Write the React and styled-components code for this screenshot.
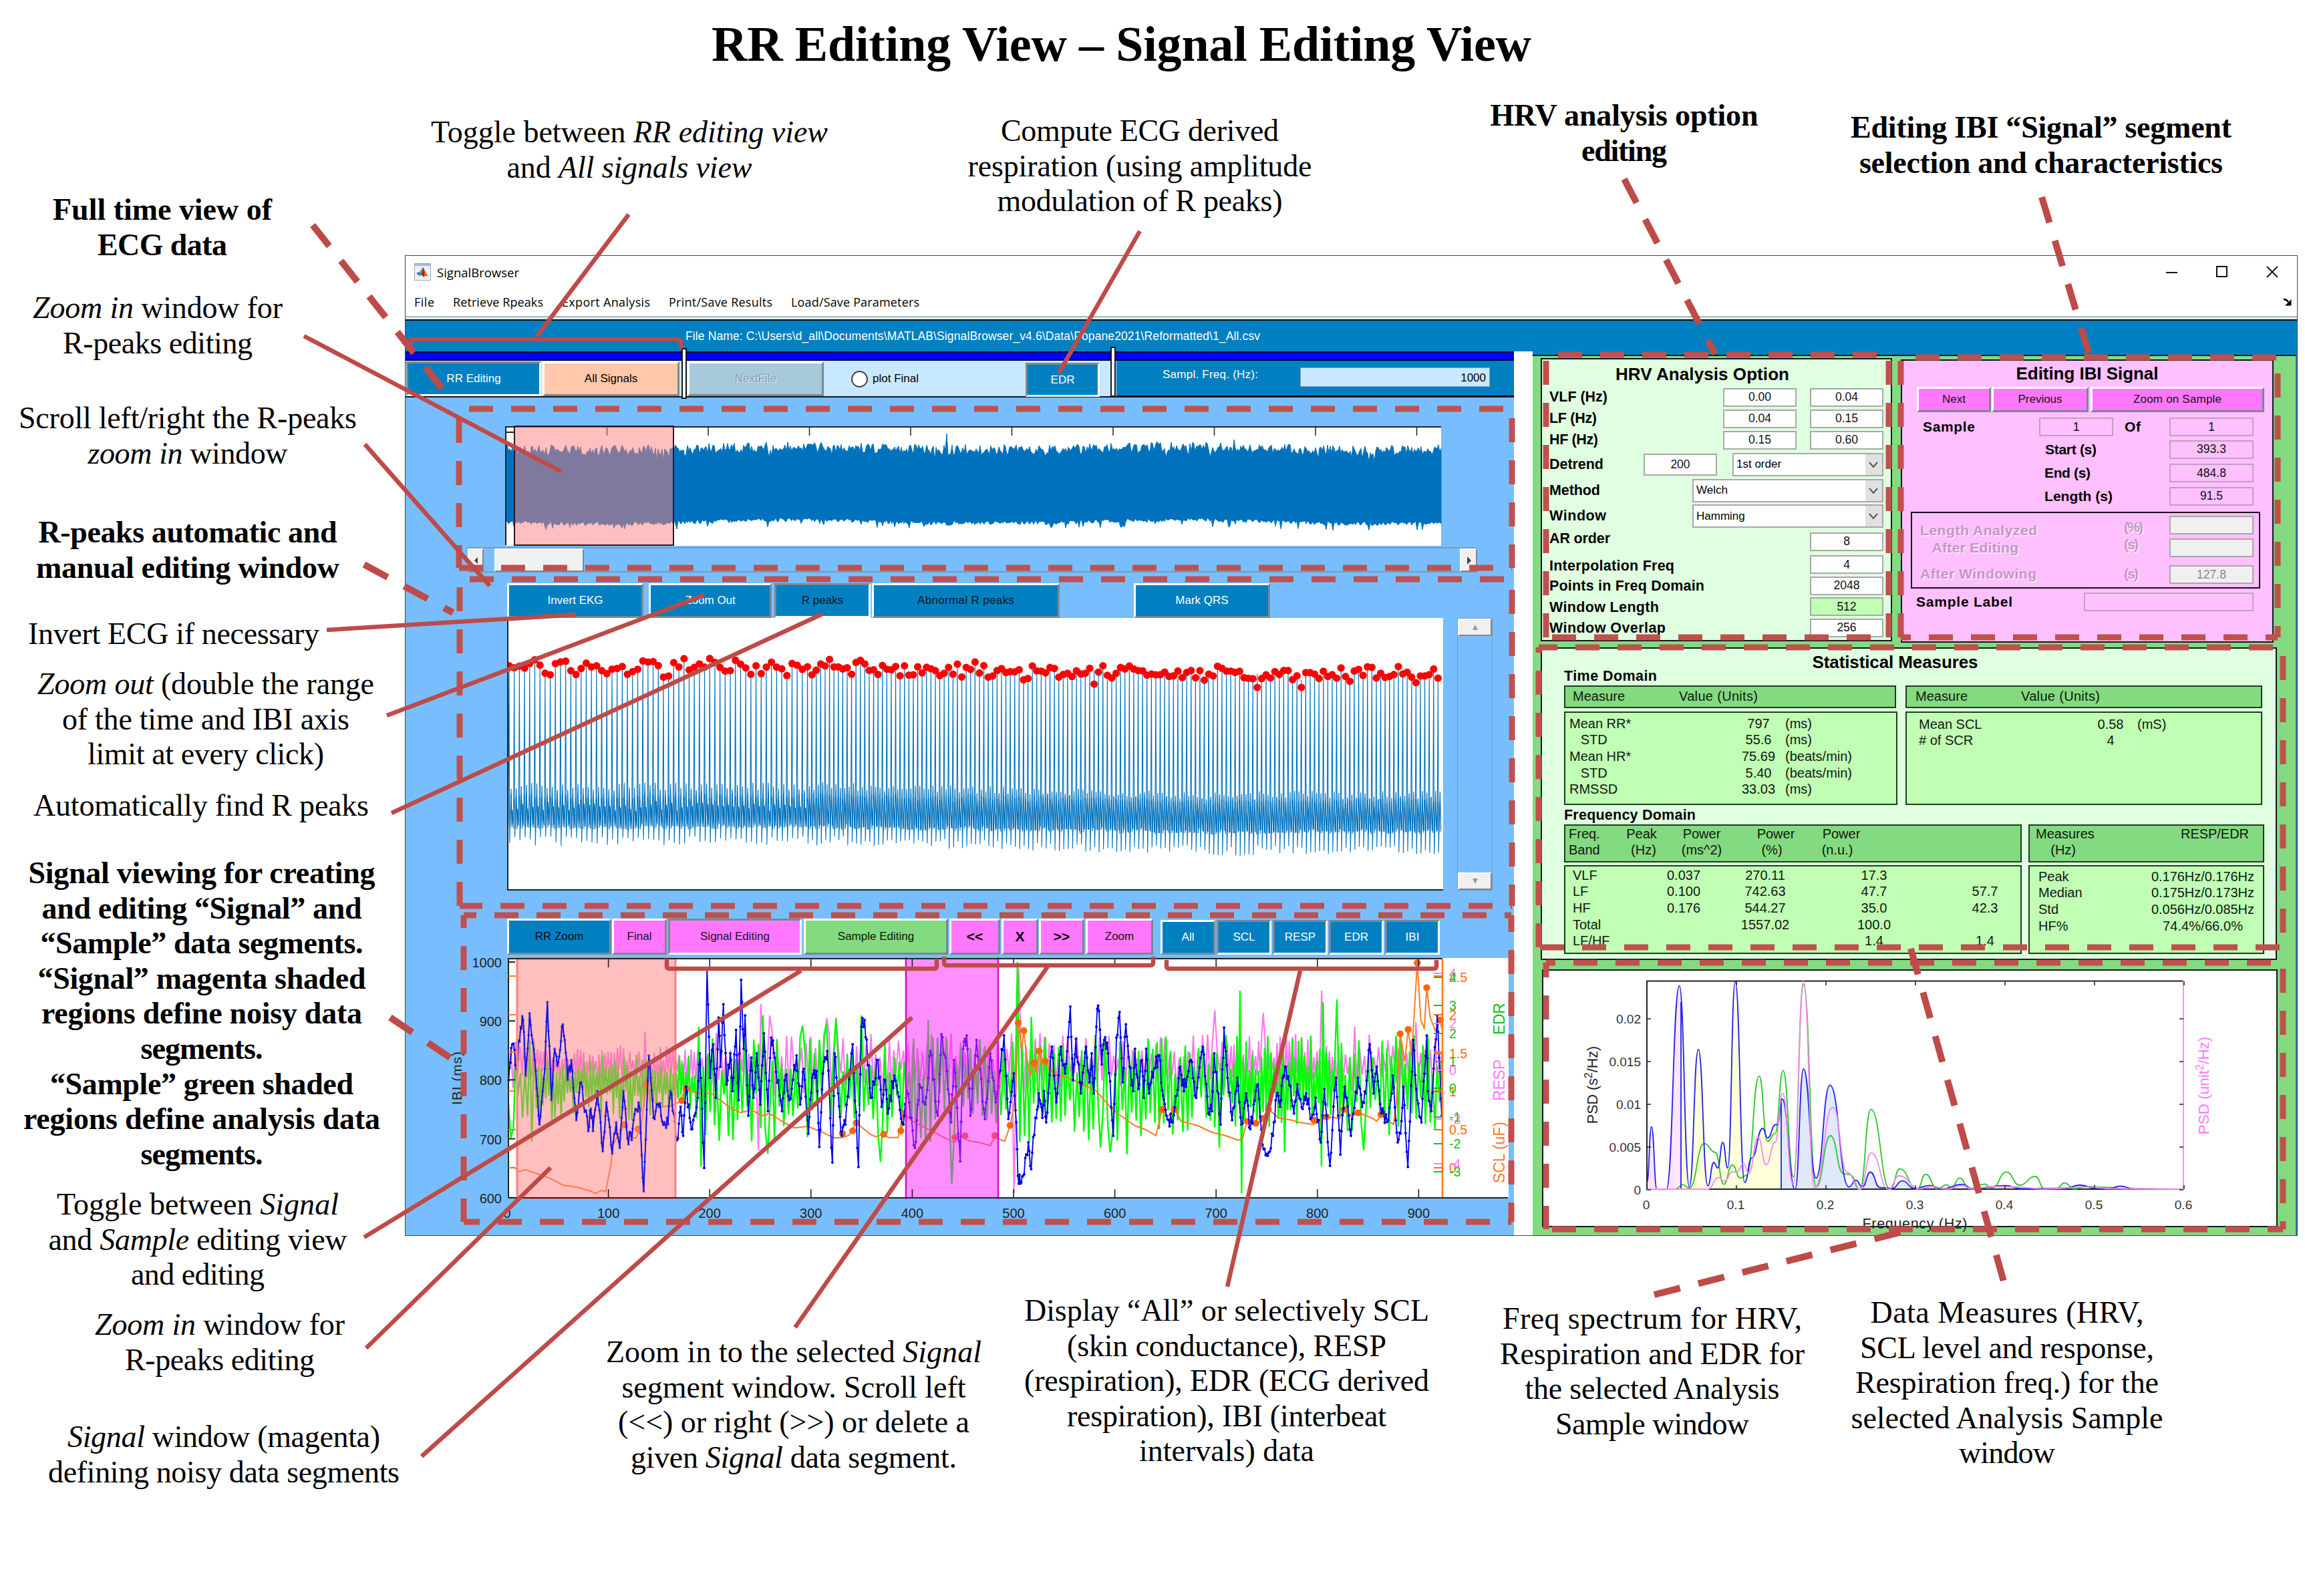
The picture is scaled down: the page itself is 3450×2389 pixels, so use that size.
import React, { useLayoutEffect, useRef, useState } from "react";
import styled, { createGlobalStyle, css } from "styled-components";

const RED = "#c0504d";
const BLUE = "#0080c0";
const SKY = "#78beff";
const ICE = "#c8e8ff";
const GREEN = "#84da80";
const MINT = "#e0ffe0";
const LIME = "#c0ffb4";
const PINK = "#ffc0ff";
const MAGENTA = "#ff78ff";
const SANS = '"Liberation Sans", Arial, sans-serif';
const SERIF = '"Liberation Serif", "Times New Roman", serif';

const Global = createGlobalStyle`
  body { margin: 0; background: #fff; }
  * { box-sizing: border-box; }
`;

/* ---------- text that spreads to a given width ---------- */

const FitSpan = styled.span`
  display: inline-block;
  width: max-content;
  flex: none;
  justify-self: start;
  white-space: pre;
`;

function Fit({ w, children }) {
  const ref = useRef(null);
  const [gap, setGap] = useState(0);
  useLayoutEffect(() => {
    const el = ref.current;
    const natural = el.getBoundingClientRect().width;
    setGap((w - natural) / Math.max(1, el.textContent.length - 1));
  }, []);
  return (
    <FitSpan ref={ref} style={{ letterSpacing: gap, marginRight: -gap }}>
      {children}
    </FitSpan>
  );
}

/* ---------- page ---------- */

const Page = styled.main`
  position: relative;
  width: 3450px;
  height: 2389px;
  overflow: hidden;
  background: #fff;
  font-family: ${SANS};
  color: #000;
`;

const Heading = styled.h1`
  position: absolute;
  left: 1065px;
  top: 24px;
  margin: 0;
  font: bold 74px/84px ${SERIF};
`;

const Note = styled.div`
  position: absolute;
  left: ${(p) => p.$cx - 400}px;
  top: ${(p) => p.$base - 40}px;
  width: 800px;
  display: flex;
  flex-direction: column;
  align-items: center;
  font: ${(p) => (p.$bold ? "bold" : "normal")} 46px/52.6px ${SERIF};
`;

const Overlay = styled.svg`
  position: absolute;
  left: 0;
  top: 0;
`;

/* ---------- application window ---------- */

const Desktop = styled.div`
  display: flow-root;
`;

const Frame = styled.section`
  margin: 382px 0 0 606px;
  width: 2833px;
  height: 1468px;
  display: flex;
  flex-direction: column;
  border: 1px solid #3c4848;
  background: #fff;
`;

const TitleBar = styled.header`
  height: 48px;
  flex: none;
  display: flex;
  align-items: center;
  padding: 0 28px 0 13px;
  gap: 9px;
  font: 18.5px "Open Sans", sans-serif;
`;

const Controls = styled.div`
  margin-left: auto;
  display: flex;
  gap: 57px;
`;

const MenuBar = styled.nav`
  height: 42px;
  flex: none;
  display: flex;
  align-items: center;
  gap: 28px;
  padding: 0 8px 0 13px;
  font: 18px "Open Sans", sans-serif;
  svg { margin-left: auto; }
`;

const FileBand = styled.div`
  height: 53px;
  flex: none;
  display: flex;
  align-items: center;
  padding-left: 419px;
  border-top: 2px solid #b4b4b4;
  background: linear-gradient(#d8f0f8 0 3px, #001018 3px 5px, ${BLUE} 5px);
  color: #fff;
  font-size: 17.5px;
  padding-top: 6px;
`;

const Body = styled.div`
  flex: 1;
  display: flex;
  gap: 28px;
  min-height: 0;
`;

const Left = styled.div`
  width: 1659px;
  flex: none;
  display: flex;
  flex-direction: column;
  background: ${SKY};
`;

const Stripe = styled.div`
  height: 14px;
  flex: none;
  background: #0000ff;
  border: solid #000030;
  border-width: 2px 0;
`;

const Toolbar = styled.div`
  height: 55px;
  flex: none;
  display: flex;
  align-items: flex-start;
  background: ${ICE};
  border-bottom: 2px solid #101820;
`;

const Button = styled.button`
  width: ${(p) => p.$w}px;
  height: ${(p) => p.$h || 52}px;
  margin: ${(p) => p.$mt || 0}px 0 0 ${(p) => p.$ml || 0}px;
  flex: none;
  padding: 0;
  display: flex;
  align-items: center;
  justify-content: center;
  border: 3px solid;
  border-color: ${(p) => (p.$down ? "#7c8890 #fff #fff #7c8890" : "#fff #7c8890 #7c8890 #fff")};
  background: ${(p) => p.$bg || BLUE};
  color: ${(p) => p.$fg || "#fff"};
  font: ${(p) => (p.$bold ? "bold" : "normal")} ${(p) => p.$size || 17}px ${SANS};
  ${(p) => p.$off && css`text-shadow: 1px 1px 0 #e4f0f8;`}
`;

const Divider = styled.i`
  flex: none;
  position: relative;
  width: 8px;
  height: ${(p) => p.$h}px;
  margin: ${(p) => p.$mt}px 1px 0 ${(p) => p.$ml}px;
  background: #fff;
  border: 2px solid #101820;
`;

const Radio = styled.label`
  display: flex;
  align-items: center;
  gap: 7px;
  height: 54px;
  width: 302px;
  padding-left: 41px;
  font-size: 17px;
  &::before {
    content: "";
    width: 21px;
    height: 21px;
    border: 2px solid #444;
    border-radius: 50%;
    background: #fff;
  }
`;

const Sampling = styled.div`
  flex: 1;
  height: 54px;
  display: flex;
  background: ${BLUE};
  border-bottom: 2px solid #000;
  padding-left: 69px;
  color: #fff;
  font-size: 17px;
  line-height: 42px;
`;

const Rate = styled.div`
  width: 284px;
  height: 29px;
  margin: 10px 0 0 63px;
  padding-right: 5px;
  border: 1px solid #8ca0b0;
  background: ${ICE};
  color: #000;
  text-align: right;
  line-height: 29px;
`;

const Plot = styled.svg`
  display: block;
  flex: none;
  margin: ${(p) => p.$m || "0"};
  text { font-family: ${SANS}; }
`;

const HScroll = styled.div`
  display: flex;
  flex: none;
  width: 1511px;
  height: 38px;
  margin: 2px 0 0 93px;
  border: 2px solid #7c98b4;
  border-width: 2px 0;
`;

const Knob = styled.div`
  width: ${(p) => p.$w}px;
  height: ${(p) => p.$h}px;
  flex: none;
  margin-left: ${(p) => p.$ml || 0};
  display: flex;
  align-items: center;
  justify-content: center;
  background: #f0f0f0;
  border: 2px solid;
  border-color: #fff #7c8890 #7c8890 #fff;
`;

const ButtonRow = styled.div`
  display: flex;
  flex: none;
  align-items: flex-start;
  margin: ${(p) => p.$m};
`;

const ChartRow = styled.div`
  display: flex;
  flex: none;
  gap: 20px;
  margin-left: 152px;
`;

const VScroll = styled.div`
  width: 53px;
  height: 408px;
  display: flex;
  flex-direction: column;
  justify-content: space-between;
  border: 1px solid #7c98b4;
`;

/* ---------- right side ---------- */

const Right = styled.div`
  width: 1144px;
  flex: none;
  display: flex;
  flex-direction: column;
  background: ${GREEN};
  border-top: 5px solid ${BLUE};
  border-right: 2px solid #3870a0;
  box-shadow: inset 0 2px #101820;
  padding: 5px 0 0 12px;
`;

const Panels = styled.div`
  display: flex;
  height: 434px;
  gap: 13px;
`;

const HrvPanel = styled.section`
  width: 526px;
  height: 424px;
  padding: 3px 11px 0 11px;
  border: 2px solid #101820;
  background: ${MINT};
`;

const PanelTitle = styled.h2`
  margin: 0 ${(p) => p.$mr || 0}px 0 0;
  height: ${(p) => p.$h}px;
  text-align: center;
  font: bold 26px/38px ${SANS};
`;

const FormRow = styled.div`
  height: ${(p) => p.$h}px;
  display: flex;
  align-items: center;
  font: bold 21.5px ${SANS};
  & > :first-child { transform: translateY(${(p) => p.$dy || 0}px); }
  & > :nth-child(2) { margin-left: auto; }
`;

const Field = styled.div`
  width: ${(p) => p.$w || 110}px;
  height: ${(p) => p.$h || 28}px;
  margin-left: ${(p) => p.$ml || 0}px;
  flex: none;
  display: flex;
  align-items: center;
  justify-content: center;
  border: 2px solid ${(p) => p.$edge || "#a8a8a8"};
  background: ${(p) => p.$bg || "#fff"};
  color: ${(p) => p.$fg || "#111"};
  font: 17.5px ${SANS};
  text-shadow: none;
`;

const Select = styled.div`
  width: ${(p) => p.$w}px;
  height: 35px;
  margin-left: ${(p) => p.$ml || 0}px;
  flex: none;
  display: flex;
  align-items: center;
  justify-content: space-between;
  padding-left: 4px;
  border: 2px solid #a8a8a8;
  background: linear-gradient(to left, #e0e0e0 25px, #fff 25px);
  font: 17px ${SANS};
`;

const IbiPanel = styled.section`
  width: 558px;
  height: 424px;
  margin-top: 2px;
  border: 2px solid #101820;
  background: ${PINK};
  font: bold 21px ${SANS};
`;

const IbiButtons = styled.div`
  display: flex;
  padding-left: 22px;
  margin-bottom: 6px;
`;

const IbiRow = styled.div`
  height: ${(p) => p.$h}px;
  display: grid;
  align-items: center;
  grid-template-columns: ${(p) => p.$cols};
  padding-left: ${(p) => p.$pl}px;
`;

const GreyBox = styled.div`
  width: 523px;
  height: 115px;
  margin: 7px 0 0 13px;
  padding-left: 12px;
  display: grid;
  grid-template-columns: 305px 68px 126px;
  border: 2px solid #181018;
  color: #c09ac0;
  text-shadow: 1.5px 1.5px 0 #ffe8ff;
`;

const GreyColumn = styled.div`
  display: flex;
  flex-direction: column;
  align-items: flex-start;
  padding-top: ${(p) => p.$pt}px;
  line-height: 26px;
  gap: ${(p) => p.$gap || 0}px;
  & > :last-child { margin-top: ${(p) => p.$last}px; }
`;

const Stats = styled.section`
  width: 1102px;
  height: 470px;
  padding: 1px 0 0 33px;
  border: 2px solid #101820;
  background: ${MINT};
  font-size: 20px;
`;

const Sub = styled.h3`
  margin: 0;
  height: ${(p) => p.$h}px;
  font: bold 21.5px/28px ${SANS};
`;

const Pair = styled.div`
  display: flex;
  align-items: flex-start;
  gap: ${(p) => p.$gap}px;
  margin-bottom: ${(p) => p.$mb}px;
`;

const Box = styled.div`
  width: ${(p) => p.$w}px;
  height: ${(p) => p.$h}px;
  padding: ${(p) => p.$p};
  border: 2px solid #184018;
  background: ${(p) => (p.$head ? GREEN : LIME)};
  overflow: hidden;
  color: #101810;
`;

const Cells = styled.div`
  display: grid;
  grid-template-columns: ${(p) => p.$cols};
  line-height: 24.7px;
  white-space: pre;
  text-align: center;
  & > :first-child { text-align: left; }
  ${(p) => p.$left && css`text-align: left;`}
`;

const Unit = styled.span`
  margin-left: -10px;
  text-align: left;
`;

const Spectrum = styled.div`
  margin-top: 14px;
  margin-left: 2px;
`;

/* ---------- data ---------- */

function rng(seed) {
  let s = seed;
  return () => {
    s = (s * 1664525 + 1013904223) % 4294967296;
    return s / 4294967296;
  };
}

const line = (pts) => "M" + pts.map((p) => p[0].toFixed(1) + " " + p[1].toFixed(1)).join("L");

function ecgBand() {
  const r = rng(7);
  const up = [];
  const low = [];
  for (let i = 0; i <= 700; i++) {
    const x = i * 2;
    const drift = 5 * Math.sin(i / 46) + (i > 335 && i < 400 ? -2 : 0);
    up.push([x, 34 + drift * 0.5 + (r() - 0.5) * 16 + (r() > 0.92 ? 10 : 0)]);
    low.push([x, 143 + drift * 0.6 + (r() - 0.5) * 6 + (r() > 0.94 ? 8 : 0)]);
  }
  up[330][1] = 11;
  up[545][1] = 20;
  return line(up.concat(low.reverse())) + "Z";
}

function beats() {
  const r = rng(23);
  const tops = [];
  const trace = [];
  const waves = [];
  let x = 3;
  while (x < 1398) {
    const k = x / 1398;
    const sag = k < 0.35 ? 0 : k < 0.8 ? (k - 0.35) * 36 : 13;
    const peak = 74 + sag * 0.75 + 8 * Math.sin(x * 0.14) * (k < 0.3 ? 0.8 : 0.45) + (r() - 0.5) * 20;
    const base = 302 + sag * 0.5 + (r() - 0.5) * 5;
    tops.push([x, peak]);
    trace.push([x - 3, base - 14 - r() * 12], [x - 1.2, base + 8 + r() * 6], [x, peak]);
    trace.push([x + 0.8, 334 + sag + (r() - 0.5) * 14], [x + 1.8, base - 2], [x + 3, 252 + sag + (r() - 0.5) * 12], [x + 4.2, base + 12]);
    waves.push([x, base - 32 - r() * 6], [x + 1.6, base + 12], [x + 3, base - 34 - r() * 6], [x + 4.4, base + 8]);
    x += k < 0.32 ? 7.7 : 6.6;
  }
  tops[Math.round(tops.length * 0.61)][1] = 99;
  tops[Math.round(tops.length * 0.79)][1] = 104;
  tops[Math.round(tops.length * 0.84)][1] = 104;
  return { tops, trace, waves };
}

const unpack = (s, sx, ox) =>
  s.trim().split(/\s+/).map((p) => {
    const [x, y] = p.split(",").map(Number);
    return [ox + x / sx, 1350 + y / 3];
  });

const ibiKnots = unpack(
  `150,800 160,640 172,750 183,560 190,530 197,780 208,500 225,760 235,1000 250,750 257,450 268,890 277,660 287,720 297,560 305,620 313,800 323,710 337,980 350,810 370,1030 377,930 383,1030 395,850 410,1120 420,900 436,1130 447,990 457,1105 467,850 478,1060 490,1070 500,930 512,930 523,1300 537,690 550,970 565,920 580,990 590,1000 597,850 615,1070 625,920 632,1050 640,830 650,970 657,1020 672,880 678,680 690,1195 698,300 706,790 715,640 722,880 730,520 735,740 743,460 752,820 762,680 768,850 778,575 785,890 792,350 799,660 803,510 812,960 820,700 826,880 835,680 845,910 855,590 866,940 875,610 885,700 905,940 915,780 925,890 945,690 955,910 965,750 978,1040 988,790 1000,760 1008,1100 1018,770 1030,670 1044,1170 1050,680 1060,860 1070,1050 1080,1000 1100,640 1116,1190 1124,560 1133,530 1150,880 1170,710 1180,920 1190,800 1197,950 1215,780 1240,1000 1250,850 1272,1105 1285,820 1300,910 1315,670 1335,960 1345,595 1360,760 1372,990 1380,710 1397,1165 1405,660 1415,600 1425,960 1442,620 1465,975 1480,680 1495,900 1518,600 1530,975 1545,770 1552,990`,
  1.845, 680
).concat(
  unpack(
    `45,1230 52,1265 60,1230 75,1080 83,1200 95,970 105,860 115,970 120,850 126,990 142,650 155,900 168,650 180,770 195,470 203,800 211,615 225,860 240,650 250,810 256,680 262,860 272,480 277,490 285,730 292,620 303,680 318,1050 327,610 336,495 345,810 354,550 365,740 375,850 380,660 390,840 400,710 405,880 412,660 420,860 435,750 450,690 460,870 470,960 488,990 500,870 510,740 520,850 540,710 555,880 574,650 590,950 600,940 607,680 625,1000 635,565 645,790 658,980 673,790 685,1000 698,860 710,1020 732,820 745,1090 760,1140 775,1050 785,870 795,920 805,780 812,740 835,950 845,820 860,930 870,860 885,970 897,880 912,1080 922,840 938,1185 955,790 968,1135 980,830 998,1050 1018,790 1030,920 1040,860 1052,640 1063,860 1072,740 1085,950 1105,980 1118,780 1132,1080 1140,1040 1148,830 1161,1190 1176,620 1188,890 1200,990 1215,600 1218,850 1228,940 1245,510 1250,700 1258,960`,
    1.912, 1500
  )
);

const sclKnots = unpack(
  `150,1195 165,1192 180,1212 195,1202 230,1222 260,1238 300,1272 340,1282 375,1298 390,1310 407,1295 418,1302 425,1240 432,1190 438,1090 455,1040 470,1000 480,1050 500,1062 515,1020 530,820 545,890 570,920 600,915 620,900 640,838 665,855 685,862 708,858 730,885 760,922 790,946 820,935 850,960 870,950 910,990 940,1015 975,1008 1010,1030 1050,1060 1072,1058 1090,1048 1110,992 1150,1045 1165,1055 1180,1045 1200,1058 1225,1058 1240,950 1270,990 1320,1030 1380,1082 1395,1052 1425,1075 1450,1080 1480,1096 1493,1050 1505,1065 1520,1075 1535,1003`,
  1.845, 680
).concat(
  unpack(
    `38,880 46,540 56,660 62,578 70,700 81,780 90,720 98,765 106,670 113,730 123,715 135,750 155,778 180,785 230,820 270,850 300,905 330,950 380,1005 410,1022 440,1050 458,930 474,965 492,930 512,985 560,1005 600,1035 640,1050 675,1070 688,1065 702,975 726,1005 745,970 762,930 790,970 830,980 850,990 890,1000 930,965 965,972 978,930 1000,965 1018,945 1060,972 1072,985 1084,955 1120,1000 1128,900 1139,592 1152,715 1162,573 1172,690 1180,480 1188,272 1198,530 1208,570 1215,385 1225,520 1240,580 1254,530 1258,570`,
    1.912, 1500
  )
);

const sclDots = unpack(
  `530,820 628,892 640,838 470,1000 508,1020 1072,1040 1100,1028 1110,992 1186,1043 1233,1028 1240,950 1383,1058 1410,1050 1493,1050 1535,1003`,
  1.845, 680
).concat(
  unpack(
    `46,543 62,578 90,722 106,670 123,715 458,932 492,932 702,985 726,994 745,972 762,932 892,980 928,965 978,932 1018,947 1084,955 1139,592 1162,573 1188,274 1215,385 1254,530`,
    1.912, 1500
  )
);

function ibiSeries() {
  const r = rng(91);
  const out = [];
  ibiKnots.forEach((p, i) => {
    out.push(p);
    const q = ibiKnots[i + 1];
    if (!q) return;
    const n = Math.max(1, Math.round((q[0] - p[0]) / 2));
    for (let k = 1; k <= n; k++) {
      const t = k / (n + 1);
      out.push([p[0] + (q[0] - p[0]) * t, p[1] + (q[1] - p[1]) * t + (r() - 0.5) * 22]);
    }
  });
  return out;
}

function breath(seed, mid, up, down, spikes) {
  const r = rng(seed);
  const out = [];
  let high = false;
  let x = 761;
  while (x < 2159) {
    const calm = x > 800 && x < 1040;
    const busy = x > 1840 && x < 2010;
    const a = calm ? 0.62 : 1;
    out.push([x, high ? mid - up * a * (0.2 + r() * 0.9) : mid + down * a * (busy ? 0.75 : 1) * (0.15 + r() * 0.95)]);
    high = !high;
    x += calm ? 2.3 : busy ? 2.3 : 3.1 + r() * 0.8;
  }
  spikes.forEach(([sx, sy]) => {
    let best = out[0];
    out.forEach((p) => {
      if (Math.abs(p[0] - sx) < Math.abs(best[0] - sx)) best = p;
    });
    best[1] = sy;
  });
  return out;
}

const { tops, trace, waves } = beats();
const bandPath = ecgBand();
const ibi = ibiSeries();
const green = breath(5, 1624, 68, 78, [
  [765, 1703], [1046, 1537], [1049, 1746], [1141, 1520], [1148, 1727], [1201, 1535], [1238, 1532], [1250, 1525], [1289, 1520], [1319, 1739],
  [1390, 1527], [1424, 1465], [1426, 1772], [1524, 1440], [1543, 1522], [1646, 1718], [1661, 1725], [1688, 1728], [1826, 1718], [1857, 1483],
  [1859, 1786], [1922, 1725], [1978, 1746], [1980, 1500], [2000, 1496], [2040, 1722],
]);
const resp = breath(17, 1596, 46, 40, [
  [965, 1544], [1140, 1503], [1136, 1722], [1151, 1520], [1237, 1524], [1250, 1523], [1519, 1786], [1524, 1450], [1818, 1512], [1891, 1516],
  [1979, 1483], [2027, 1537], [2120, 1530],
]);

const swell = (s) => {
  const pts = s.trim().split(/\s+/).map((p) => {
    const [x, y] = p.split(",").map(Number);
    return [2280 + x / 1.34, 1400 + y / 3];
  });
  let d = `M${pts[0][0]} ${pts[0][1]}`;
  for (let i = 1; i < pts.length; i++) {
    const m = (pts[i - 1][0] + pts[i][0]) / 2;
    d += `C${m} ${pts[i - 1][1]} ${m} ${pts[i][1]} ${pts[i][0]} ${pts[i][1]}`;
  }
  return d;
};
const psdBlue = swell(
  `248,1110 257,860 268,1141 287,1141 313,226 333,1130 351,512 370,1125 382,1020 390,1045 400,930 410,1045 425,206 444,1110 458,1000 480,867 490,910 506,850 510,850 519,735 545,1141 562,600 587,1090 615,673 653,1130 667,1100 680,1130 696,1063 715,1132 740,1137 760,1103 785,1138 815,1123 840,1138 881,1118 900,1138 966,1124 1000,1138 1085,1136 1117,1122 1150,1138 1175,1138 1197,1126 1225,1139 1324,1140`
);
const psdGreen = swell(
  `305,1140 320,1120 333,1135 363,935 385,975 402,1118 419,1031 435,1090 448,1078 473,632 490,925 505,890 521,608 542,1085 562,220 587,1130 616,900 642,1070 655,1075 675,1141 697,782 736,1141 755,1049 790,1141 807,1073 830,1139 850,1120 858,1138 875,1090 895,1138 925,1117 940,1135 969,1063 995,1122 1027,1083 1045,1138 1070,1136 1085,1112 1105,1138 1130,1128 1175,1132 1200,1138 1324,1140`
);
const psdPink = swell(
  `248,1140 370,1140 392,1087 403,1105 420,1062 428,1065 442,1025 452,1070 471,907 487,1030 505,930 520,710 541,1118 562,206 584,1135 621,772 650,1065 675,1141 698,978 733,1141 753,1080 795,1138 820,1128 850,1139 881,1124 900,1139 940,1128 990,1130 1040,1139 1140,1130 1180,1138 1324,1140`
);

/* ---------- annotations ---------- */

const I = (t) => <i>{t}</i>;
const notes = [
  [942, 212, 0, [[<>Toggle between {I("RR editing view")}</>, 594], [<>and {I("All signals view")}</>, 367]]],
  [1706, 210, 0, [["Compute ECG derived", 416], ["respiration (using amplitude", 515], ["modulation of R peaks)", 427]]],
  [2431, 187, 1, [["HRV analysis option", 401], ["editing", 128]]],
  [3055, 205, 1, [["Editing IBI “Signal” segment", 570], ["selection and characteristics", 544]]],
  [243, 328, 1, [["Full time view of", 328], ["ECG data", 194]]],
  [236, 475, 0, [[<>{I("Zoom in")} window for</>, 374], ["R-peaks editing", 284]]],
  [281, 640, 0, [["Scroll left/right the R-peaks", 506], [<>{I("zoom in")} window</>, 299]]],
  [281, 811, 1, [["R-peaks automatic and", 447], ["manual editing window", 454]]],
  [260, 963, 0, [["Invert ECG if necessary", 436]]],
  [308, 1038, 0, [[<>{I("Zoom out")} (double the range</>, 504], ["of the time and IBI axis", 430], ["limit at every click)", 354]]],
  [301, 1220, 0, [["Automatically find R peaks", 502]]],
  [302, 1321, 1, [["Signal viewing for creating", 519], ["and editing “Signal” and", 479], ["“Sample” data segments.", 483], ["“Signal” magenta shaded", 491], ["regions define noisy data", 480], ["segments.", 183], ["“Sample” green shaded", 454], ["regions define analysis data", 534], ["segments.", 183]]],
  [296, 1817, 0, [[<>Toggle between {I("Signal")}</>, 422], [<>and {I("Sample")} editing view</>, 447], ["and editing", 200]]],
  [329, 1997, 0, [[<>{I("Zoom in")} window for</>, 374], ["R-peaks editing", 284]]],
  [335, 2165, 0, [[<>{I("Signal")} window (magenta)</>, 468], ["defining noisy data segments", 526]]],
  [1188, 2038, 0, [[<>Zoom in to the selected {I("Signal")}</>, 562], ["segment window. Scroll left", 515], ["(<<) or right (>>) or delete a", 526], [<>given {I("Signal")} data segment.</>, 488]]],
  [1836, 1976, 0, [["Display “All” or selectively SCL", 606], ["(skin conductance), RESP", 478], ["(respiration), EDR (ECG derived", 606], ["respiration), IBI (interbeat", 478], ["intervals) data", 262]]],
  [2473, 1988, 0, [["Freq spectrum for HRV,", 448], ["Respiration and EDR for", 456], ["the selected Analysis", 381], ["Sample window", 290]]],
  [3004, 1979, 0, [["Data Measures (HRV,", 409], ["SCL level and response,", 440], ["Respiration freq.) for the", 454], ["selected Analysis Sample", 467], ["window", 144]]],
];

const leaders = [
  "M941 321L803 504", "M1706 346L1585 558", "M455 503L840 706", "M546 665L733 877", "M489 943L862 920", "M579 1071L1054 891",
  "M586 1217L1231 919", "M545 1852L1199 1453", "M548 2018L824 1748", "M631 2180L1365 1523", "M1190 1987L1568 1447", "M1837 1926L1946 1453",
];
const brackets = [
  "M614 522V512Q614 508 618 508H1015Q1019 508 1019 512V522", "M998 1435V1446Q998 1450 1002 1450H1398Q1402 1450 1402 1446V1435",
  "M1413 1432V1441Q1413 1445 1417 1445H1722Q1726 1445 1726 1441V1432", "M1746 1437V1446Q1746 1450 1750 1450H2146Q2150 1450 2150 1446V1437",
];
const dashedLeaders = [
  "M468 337L666 587", "M545 845L678 917", "M584 1523L681 1588", "M2431 268L2567 530", "M3056 295L3127 531", "M2476 1938L2855 1842", "M2860 1420L3002 1929",
];
const regions = [
  [687, 612, 2263, 850, 15, 14, 0, 15],
  [688, 867, 2263, 1356, 15, 16, -2, 12],
  [694, 1370, 2262, 1829, -17, -11, -12, -17],
  [2314, 531, 2827, 954, 18, 9, 9, 9],
  [2845, 535, 3409, 954, 22, 24, -21, 5],
  [2303, 969, 3417, 1418, -8, 13, 2, -28],
  [2314, 1441, 3417, 1840, -22, 9, 9, -14],
];

function Region({ box: [l, t, r, b, top, right, bottom, left] }) {
  const side = (d, start) => <path d={d} strokeDashoffset={-start} />;
  return (
    <g strokeDasharray="36 27" strokeWidth="9" fill="none">
      {side(`M${l} ${t}H${r}`, top)}
      {side(`M${r} ${t}V${b}`, right)}
      {side(`M${l} ${b}H${r}`, bottom)}
      {side(`M${l} ${t}V${b}`, left)}
    </g>
  );
}

/* ---------- charts ---------- */

function FullEcg() {
  return (
    <Plot $m="42px 0 0 149px" width="1403" height="180" viewBox="-1 -1 1403 180">
      <rect width="1400" height="179" fill="#fff" />
      <path d={bandPath} fill="#0072bd" stroke="#0072bd" strokeWidth="1" />
      <path d="M0 178V1H1400M0 9H13" stroke="#222" strokeWidth="2" fill="none" />
      {[1, 2, 3, 4, 5, 6, 7, 8, 9].map((n) => (
        <path key={n} d={`M${n * 151.5} 1v13`} stroke="#222" strokeWidth="1.5" />
      ))}
      <rect x="13" y="0" width="238" height="178" fill="#ff8080" fillOpacity=".5" stroke="#301820" strokeWidth="2" />
    </Plot>
  );
}

function PeaksChart() {
  return (
    <Plot width="1402" height="408" viewBox="0 0 1402 408">
      <rect width="1401" height="408" fill="#fff" />
      <path d={line(trace)} fill="none" stroke="#0072bd" strokeWidth="1.1" />
      <path d={line(waves)} fill="none" stroke="#0072bd" strokeWidth="1" strokeOpacity=".75" />
      {tops.map(([x, y], i) => (
        <circle key={i} cx={x} cy={y} r="5.6" fill="#f00" />
      ))}
      <path d="M1 0V407H1401" stroke="#222" strokeWidth="2" fill="none" />
    </Plot>
  );
}

const rightTicks = [
  ["#ff6a10", [["2.5", 1463], ["2", 1519], ["1.5", 1577], ["1", 1634], ["0.5", 1691], ["0", 1748]]],
  ["#ff78ff", [["4", 1457], ["2", 1532], ["0", 1602], ["-2", 1675], ["-4", 1742]]],
  ["#10c020", [["4", 1463], ["3", 1505], ["2", 1547], ["1", 1589], ["0", 1629], ["-1", 1672], ["-2", 1712], ["-3", 1754]]],
];

function SignalsChart() {
  return (
    <Plot width="1659" height="420" viewBox="607 1429 1659 420">
      <rect x="761" y="1434" width="1497" height="359" fill="#fff" />
      <path d={line(resp)} fill="none" stroke="#ff78f0" strokeWidth="2.2" />
      <path d={line(green)} fill="none" stroke="#00ff00" strokeWidth="2.4" />
      <g fill="#ff6600">
        <path d={line(sclKnots)} fill="none" stroke="#ff7a20" strokeWidth="2" strokeLinejoin="round" />
        {sclDots.map(([x, y], i) => (
          <circle key={i} cx={x} cy={y} r="5.2" />
        ))}
      </g>
      <path d={line(ibi)} fill="none" stroke="#0000f0" strokeWidth="1.8" strokeLinejoin="round" />
      {ibi.map(([x, y], i) => (
        <circle key={i} cx={x} cy={y} r="2" fill="#0000e0" />
      ))}
      <rect x="1356" y="1434" width="138" height="360" fill="#ff20ff" fillOpacity=".5" />
      <path d="M1356 1433V1795M1494 1433V1795" stroke="#d010d0" strokeWidth="2.5" />
      <rect x="774" y="1434" width="237" height="360" fill="#ff8080" fillOpacity=".5" />
      <path d={line(ibi.filter((p) => p[0] > 774 && p[0] < 1010))} fill="none" stroke="#1010f0" strokeWidth="1.8" />
      <rect x="774" y="1434" width="237" height="360" fill="none" stroke="#ff8080" strokeWidth="3" />
      <path d="M761 1793V1435H2159M761 1793H2257" fill="none" stroke="#222" strokeWidth="2" />
      {[0, 1, 2, 3, 4, 5, 6, 7, 8, 9].map((n) => (
        <g key={n}>
          {n > 0 && <path d={`M${759 + n * 151.6} 1435v13M${759 + n * 151.6} 1793v-13`} stroke="#222" strokeWidth="1.6" />}
          <text x={759 + n * 151.6} y="1823" textAnchor="middle" fontSize="20" fill="#222">{n * 100}</text>
        </g>
      ))}
      {[1000, 900, 800, 700, 600].map((v, i) => (
        <g key={v}>
          <path d={`M761 ${1440 + i * 88.2}h10`} stroke="#222" strokeWidth="2" />
          <text x="751" y={1448 + i * 88.2} textAnchor="end" fontSize="20" fill="#222">{v}</text>
        </g>
      ))}
      {[1461, 1519, 1575, 1633, 1691, 1748].map((y) => (
        <path key={y} d={`M761 ${y}h11M2146 ${y}h13`} stroke="#ff7a20" strokeWidth="2" />
      ))}
      <path d="M2159 1436V1792" stroke="#ff7a20" strokeWidth="2.5" />
      {rightTicks.map(([color, marks]) =>
        marks.map(([t, y]) => (
          <g key={color + t}>
            <path d={`M2146 ${y}h13`} stroke={color} strokeWidth="2" />
            <text x="2169" y={y + 7} fontSize="19.5" fill={color}>{t}</text>
          </g>
        ))
      )}
      <text transform="translate(691 1614) rotate(-90)" textAnchor="middle" fontSize="21" textLength="80" fill="#222">IBI (ms)</text>
      <text transform="translate(2252 1525) rotate(-90)" textAnchor="middle" fontSize="23" textLength="48" fill="#10c020">EDR</text>
      <text transform="translate(2252 1617) rotate(-90)" textAnchor="middle" fontSize="23" textLength="62" fill="#ff78ff">RESP</text>
      <text transform="translate(2252 1725) rotate(-90)" textAnchor="middle" fontSize="23" textLength="92" fill="#ff7a20">SCL (uF)</text>
    </Plot>
  );
}

function SpectrumChart() {
  const bands = [["v", 2464, 52, "#ffe4ff"], ["l", 2516, 150, "#ffffd8"], ["h", 2666, 602, "#e0e8fc"]];
  return (
    <Plot width="1101" height="398" viewBox="2308 1451 1101 398">
      <rect x="2309" y="1452" width="1099" height="384" fill="#fff" stroke="#101820" strokeWidth="2" />
      {bands.map(([id, x, w, fill]) => (
        <g key={id}>
          <clipPath id={id}><rect x={x} y="1468" width={w} height="313" /></clipPath>
          <path d={psdBlue + "V1781H2464Z"} fill={fill} clipPath={`url(#${id})`} />
        </g>
      ))}
      <path d="M2465 1781V1468.5H3268M2465 1780H3268" fill="none" stroke="#222" strokeWidth="2" />
      <path d="M3268 1468V1781" stroke="#ff90f0" strokeWidth="2" />
      <g fill="none" strokeWidth="1.8">
        <path d={psdGreen} stroke="#28c828" />
        <path d={psdBlue} stroke="#2020f0" />
        <path d="M2516 1500V1780M2666 1650V1780" stroke="#2020f0" />
        <path d={psdPink} stroke="#f888f0" />
      </g>
      {["0", "0.1", "0.2", "0.3", "0.4", "0.5", "0.6"].map((t, i) => (
        <g key={t}>
          <path d={`M${2465 + i * 134} 1469v6M${2465 + i * 134} 1780v-6`} stroke="#222" strokeWidth="1.5" />
          <text x={2464 + i * 134} y="1810" textAnchor="middle" fontSize="19" fill="#333">{t}</text>
        </g>
      ))}
      {["0", "0.005", "0.01", "0.015", "0.02"].map((t, i) => (
        <g key={t}>
          <path d={`M2465 ${1781 - i * 64}h6M3268 ${1781 - i * 64}h-6`} stroke="#222" strokeWidth="1.5" />
          <text x="2456" y={1788 - i * 64} textAnchor="end" fontSize="19" fill="#333">{t}</text>
        </g>
      ))}
      <text transform="translate(2391 1624) rotate(-90)" textAnchor="middle" fontSize="21.5" fill="#222">
        PSD (s<tspan dy="-8" fontSize="16">2</tspan><tspan dy="8">/Hz)</tspan>
      </text>
      <text transform="translate(3306 1625) rotate(-90)" textAnchor="middle" fontSize="22.5" fill="#ff78ff">
        PSD (unit<tspan dy="-8" fontSize="16">2</tspan><tspan dy="8">/Hz)</tspan>
      </text>
      <text x="2866" y="1839" textAnchor="middle" fontSize="21.5" textLength="157" fill="#222">Frequency (Hz)</text>
    </Plot>
  );
}

const Chevron = () => (
  <svg width="25" height="31" viewBox="0 0 25 31"><path d="M6 12l6 7 6-7" fill="none" stroke="#555" strokeWidth="2" /></svg>
);
const Arrow = ({ d, c = "#444" }) => (
  <svg width="12" height="12" viewBox="0 0 12 12"><path d={d} fill={c} /></svg>
);

/* ---------- window parts ---------- */

function TopBars() {
  return (
    <>
      <TitleBar>
        <svg width="25" height="26" viewBox="0 0 25 26">
          <rect x=".5" y=".5" width="24" height="25" fill="#eef2f6" stroke="#9ab" />
          <rect x="1" y="1" width="23" height="3" fill="#9cc0e0" />
          <path d="M3 15l5-2 3 3-3 3z" fill="#2a6cb0" />
          <path d="M8 13l5-7 2 4-4 8-3 1z" fill="#3aa0c0" />
          <path d="M13 6c3 4 5 10 8 14-3-1-5-2-7 2-1-3-2-4-4-4z" fill="#e06018" />
          <path d="M14 6l1 13-4-1z" fill="#902010" />
        </svg>
        <Fit w={123}>SignalBrowser</Fit>
        <Controls>
          <svg width="18" height="18"><path d="M0 10H17" stroke="#111" strokeWidth="2" /></svg>
          <svg width="18" height="18"><rect x="1" y="1" width="15" height="15" fill="none" stroke="#111" strokeWidth="2" /></svg>
          <svg width="18" height="18"><path d="M1 1L17 17M17 1L1 17" stroke="#111" strokeWidth="1.8" /></svg>
        </Controls>
      </TitleBar>
      <MenuBar>
        <Fit w={30}>File</Fit>
        <Fit w={135}>Retrieve Rpeaks</Fit>
        <Fit w={132}>Export Analysis</Fit>
        <Fit w={155}>Print/Save Results</Fit>
        <Fit w={192}>Load/Save Parameters</Fit>
        <svg width="13" height="11"><path d="M1 1.5Q4 0 8 5" fill="none" stroke="#000" strokeWidth="2.8" /><path d="M12.5 1v9.5H3z" fill="#000" /></svg>
      </MenuBar>
      <FileBand>
        <Fit w={860}>{"File Name: C:\\Users\\d_all\\Documents\\MATLAB\\SignalBrowser_v4.6\\Data\\Popane2021\\Reformatted\\1_All.csv"}</Fit>
      </FileBand>
    </>
  );
}

function LeftSide() {
  return (
    <Left>
      <Stripe />
      <Toolbar>
        <Button $w={202} $ml={1} $mt={1} $down>RR Editing</Button>
        <Button $w={205} $ml={2} $mt={1} $bg="#ffc8aa" $fg="#000">All Signals</Button>
        <Divider $h={76} $mt={-19} $ml={3} />
        <Button $w={204} $mt={1} $bg="#a8c8dc" $fg="#869eae" $off>NextFile</Button>
        <Radio>plot Final</Radio>
        <Button $w={111} $h={51} $mt={3} $down>EDR</Button>
        <Divider $h={75} $mt={-21} $ml={16} />
        <Sampling>
          <Fit w={143}>Sampl. Freq. (Hz):</Fit>
          <Rate>1000</Rate>
        </Sampling>
      </Toolbar>
      <FullEcg />
      <HScroll>
        <Knob $w={24} $h={35}><Arrow d="M9 1v10L4 6z" /></Knob>
        <Knob $w={134} $h={35} $ml="16px" />
        <Knob $w={26} $h={35} $ml="auto"><Arrow d="M4 0v12l6-6z" /></Knob>
      </HScroll>
      <ButtonRow $m="16px 0 0 152px">
        <Button $w={204}>Invert EKG</Button>
        <Button $w={184} $ml={8}>Zoom Out</Button>
        <Button $w={144} $ml={4} $down $fg="#001828">R peaks</Button>
        <Button $w={281} $ml={2} $fg="#001828"><Fit w={145}>Abnormal R peaks</Fit></Button>
        <Button $w={204} $ml={111}>Mark QRS</Button>
      </ButtonRow>
      <ChartRow>
        <PeaksChart />
        <VScroll>
          <Knob $w={51} $h={26}><Arrow d="M2 10h8L6 2z" c="#999" /></Knob>
          <Knob $w={51} $h={26}><Arrow d="M2 2h8l-4 8z" c="#999" /></Knob>
        </VScroll>
      </ChartRow>
      <ButtonRow $m="42px 0 0 152px">
        <Button $w={156} $h={54} $fg="#001020">RR Zoom</Button>
        <Button $w={82} $h={54} $ml={1} $bg={MAGENTA} $fg="#201020">Final</Button>
        <Button $w={200} $h={54} $ml={2} $down $bg={MAGENTA} $fg="#201020">Signal Editing</Button>
        <Button $w={216} $h={54} $ml={3} $bg={GREEN} $fg="#081808">Sample Editing</Button>
        <Button $w={76} $h={54} $ml={2} $bg={MAGENTA} $fg="#000" $bold $size={21}>&lt;&lt;</Button>
        <Button $w={55} $h={54} $ml={2} $bg={MAGENTA} $fg="#000" $bold $size={21}>X</Button>
        <Button $w={68} $h={54} $ml={1} $bg={MAGENTA} $fg="#000" $bold $size={21}>&gt;&gt;</Button>
        <Button $w={101} $h={54} $ml={2} $bg={MAGENTA} $fg="#201020">Zoom</Button>
        <Button $w={82} $mt={2} $ml={11}>All</Button>
        {["SCL", "RESP", "EDR", "IBI"].map((t) => (
          <Button key={t} $w={82} $mt={2} $ml={2} $down>{t}</Button>
        ))}
      </ButtonRow>
      <SignalsChart />
    </Left>
  );
}

function HrvOptions() {
  return (
    <HrvPanel>
      <PanelTitle $h={37} $mr={42}><Fit w={260}>HRV Analysis Option</Fit></PanelTitle>
      <FormRow $h={33}><Fit w={87}>VLF (Hz)</Fit><Field>0.00</Field><Field $ml={20}>0.04</Field></FormRow>
      <FormRow $h={31}><Fit w={71}>LF (Hz)</Fit><Field>0.04</Field><Field $ml={20}>0.15</Field></FormRow>
      <FormRow $h={33}><Fit w={73}>HF (Hz)</Fit><Field>0.15</Field><Field $ml={20}>0.60</Field></FormRow>
      <FormRow $h={40}><Fit w={81}>Detrend</Fit><Field $h={33}>200</Field><Select $w={226} $ml={23}>1st order<Chevron /></Select></FormRow>
      <FormRow $h={38}><Fit w={76}>Method</Fit><Select $w={286}>Welch<Chevron /></Select></FormRow>
      <FormRow $h={39}><Fit w={85}>Window</Fit><Select $w={286}>Hamming<Chevron /></Select></FormRow>
      <FormRow $h={37} $dy={-4}><Fit w={91}>AR order</Fit><Field>8</Field></FormRow>
      <FormRow $h={32} $dy={2}><Fit w={187}>Interpolation Freq</Fit><Field>4</Field></FormRow>
      <FormRow $h={31} $dy={1}><Fit w={232}>Points in Freq Domain</Fit><Field>2048</Field></FormRow>
      <FormRow $h={32} $dy={1}><Fit w={164}>Window Length</Fit><Field $bg={LIME}>512</Field></FormRow>
      <FormRow $h={31} $dy={1}><Fit w={174}>Window Overlap</Fit><Field>256</Field></FormRow>
    </HrvPanel>
  );
}

function IbiSignal() {
  const edge = "#c0a0c0";
  return (
    <IbiPanel>
      <PanelTitle $h={39}><Fit w={213}>Editing IBI Signal</Fit></PanelTitle>
      <IbiButtons>
        <Button $w={111} $h={38} $bg={MAGENTA} $fg="#201020">Next</Button>
        <Button $w={145} $h={38} $ml={1} $bg={MAGENTA} $fg="#201020">Previous</Button>
        <Button $w={260} $h={38} $ml={3} $bg={MAGENTA} $fg="#201020"><Fit w={132}>Zoom on Sample</Fit></Button>
      </IbiButtons>
      <IbiRow $h={32} $pl={31} $cols="174px 128px 67px 126px">
        <Fit w={78}>Sample</Fit><Field $w={111} $bg={PINK} $edge={edge}>1</Field><Fit w={24}>Of</Fit><Field $w={126} $bg={PINK} $edge={edge}>1</Field>
      </IbiRow>
      <IbiRow $h={35} $pl={214} $cols="186px 126px"><Fit w={77}>Start (s)</Fit><Field $w={126} $bg={PINK} $edge={edge}>393.3</Field></IbiRow>
      <IbiRow $h={36} $pl={213} $cols="187px 126px"><Fit w={69}>End (s)</Fit><Field $w={126} $bg={PINK} $edge={edge}>484.8</Field></IbiRow>
      <IbiRow $h={33} $pl={213} $cols="187px 126px"><Fit w={102}>Length (s)</Fit><Field $w={126} $bg={PINK} $edge={edge}>91.5</Field></IbiRow>
      <GreyBox>
        <GreyColumn $pt={13} $last={13}>
          <Fit w={175}>Length Analyzed</Fit>
          <Fit w={147}>{"   After Editing"}</Fit>
          <Fit w={174}>After Windowing</Fit>
        </GreyColumn>
        <GreyColumn $pt={8} $last={18}><Fit w={29}>(%)</Fit><Fit w={22}>(s)</Fit><Fit w={22}>(s)</Fit></GreyColumn>
        <GreyColumn $pt={4} $gap={6} $last={6}>
          <Field $w={126} $bg="#f0f0f0" />
          <Field $w={126} $bg="#f0f0f0" />
          <Field $w={126} $bg="#f0f0f0" $fg="#888">127.8</Field>
        </GreyColumn>
      </GreyBox>
      <IbiRow $h={40} $pl={21} $cols="251px 254px"><Fit w={144}>Sample Label</Fit><Field $w={254} $bg={PINK} $edge={edge} /></IbiRow>
    </IbiPanel>
  );
}

function Statistics() {
  const time = [["Mean RR*", "797", "(ms)"], ["   STD", "55.6", "(ms)"], ["Mean HR*", "75.69", "(beats/min)"], ["   STD", "5.40", "(beats/min)"], ["RMSSD", "33.03", "(ms)"]];
  const freq = [["VLF", "0.037", "270.11", "17.3", ""], ["LF", "0.100", "742.63", "47.7", "57.7"], ["HF", "0.176", "544.27", "35.0", "42.3"], ["Total", "", "1557.02", "100.0", ""], ["LF/HF", "", "", "1.4", "1.4"]];
  const resp = [["Peak", "0.176Hz/0.176Hz"], ["Median", "0.175Hz/0.173Hz"], ["Std", "0.056Hz/0.085Hz"], ["HF%", "74.4%/66.0%"]];
  return (
    <Stats>
      <PanelTitle $h={26} $mr={74}><Fit w={248}>Statistical Measures</Fit></PanelTitle>
      <Sub $h={28}><Fit w={139}>Time Domain</Fit></Sub>
      <Pair $gap={14} $mb={5}>
        <Box $head $w={497} $h={34} $p="2px 11px"><Cells $left $cols="159px 1fr"><Fit w={78}>Measure</Fit><Fit w={118}>Value (Units)</Fit></Cells></Box>
        <Box $head $w={534} $h={34} $p="2px 13px"><Cells $left $cols="158px 1fr"><Fit w={78}>Measure</Fit><Fit w={118}>Value (Units)</Fit></Cells></Box>
      </Pair>
      <Pair $gap={12} $mb={1}>
        <Box $w={499} $h={140} $p="4px 6px">
          {time.map(([a, b, c], i) => (
            <Cells key={i} $cols="233px 100px 150px"><span>{a}</span><span>{b}</span><Unit>{c}</Unit></Cells>
          ))}
        </Box>
        <Box $w={534} $h={140} $p="5px 18px">
          <Cells $cols="237px 100px 80px"><span>Mean SCL</span><span>0.58</span><Unit>(mS)</Unit></Cells>
          <Cells $cols="237px 100px 80px"><span># of SCR</span><span>4</span></Cells>
        </Box>
      </Pair>
      <Sub $h={28}><Fit w={197}>Frequency Domain</Fit></Sub>
      <Pair $gap={10} $mb={4}>
        <Box $head $w={685} $h={57} $p="0 5px">
          <Cells $cols="70px 78px 102px 120px 76px"><span>Freq.</span><span>Peak</span><span>Power</span><span>Power</span><span>Power</span></Cells>
          <Cells $cols="70px 84px 90px 120px 76px"><span>Band</span><span>(Hz)</span><span>(ms^2)</span><span>(%)</span><span>(n.u.)</span></Cells>
        </Box>
        <Box $head $w={353} $h={57} $p="0 9px">
          <Cells $left $cols="217px 1fr"><span>Measures</span><Fit w={102}>RESP/EDR</Fit></Cells>
          <Cells $left $cols="1fr"><span>{"    (Hz)"}</span></Cells>
        </Box>
      </Pair>
      <Pair $gap={10} $mb={0}>
        <Box $w={685} $h={133} $p="1px 11px">
          {freq.map((row, i) => (
            <Cells key={i} $cols="115px 102px 142px 184px 148px">{row.map((c, k) => <span key={k}>{c}</span>)}</Cells>
          ))}
        </Box>
        <Box $w={353} $h={133} $p="3px 13px">
          {resp.map(([a, b]) => (
            <Cells key={a} $cols="169px 154px"><span>{a}</span><span><Fit w={b.length > 12 ? 154 : 120}>{b}</Fit></span></Cells>
          ))}
        </Box>
      </Pair>
    </Stats>
  );
}

export default function App() {
  return (
    <Page>
      <Global />
      <Desktop>
        <Frame>
          <TopBars />
          <Body>
            <LeftSide />
            <Right>
              <Panels>
                <HrvOptions />
                <IbiSignal />
              </Panels>
              <Statistics />
              <Spectrum><SpectrumChart /></Spectrum>
            </Right>
          </Body>
        </Frame>
      </Desktop>
      <Overlay width="3450" height="2389" stroke={RED} fill="none">
        {regions.map((b, i) => <Region key={i} box={b} />)}
        <g stroke="#be4b48">
          {leaders.map((d) => <path key={d} d={d} strokeWidth="6.5" />)}
          {brackets.map((d) => <path key={d} d={d} strokeWidth="6.5" />)}
          {dashedLeaders.map((d) => <path key={d} d={d} strokeWidth="10" strokeDasharray="40 28" />)}
        </g>
      </Overlay>
      <Heading><Fit w={1227}>RR Editing View – Signal Editing View</Fit></Heading>
      {notes.map(([cx, base, bold, lines], i) => (
        <Note key={i} $cx={cx} $base={base} $bold={bold}>
          {lines.map(([t, w], k) => <Fit key={k} w={w}>{t}</Fit>)}
        </Note>
      ))}
    </Page>
  );
}
